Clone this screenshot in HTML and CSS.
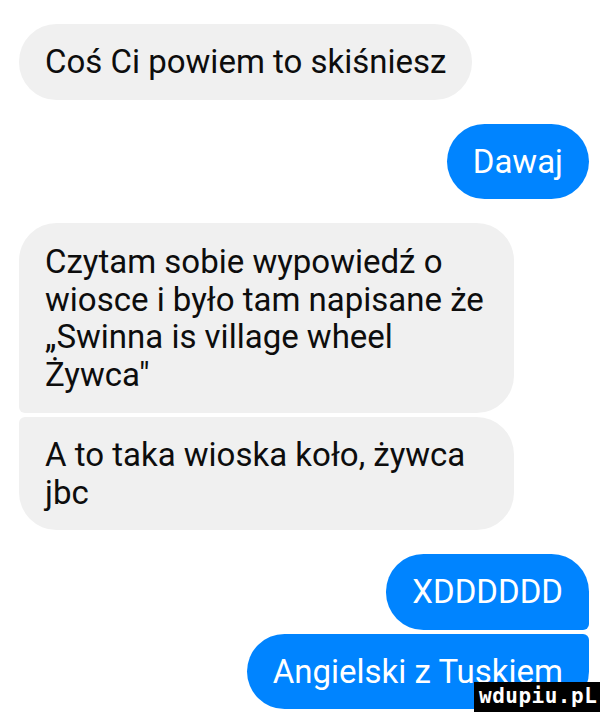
FILE: index.html
```html
<!DOCTYPE html>
<html lang="pl">
<head>
<meta charset="utf-8">
<title>Czat</title>
<link rel="stylesheet" href="styles.css">
</head>
<body>
<main class="chat">
  <div class="msg in solo">Coś Ci powiem to skiśniesz</div>
  <div class="msg out solo sep">Dawaj</div>
  <div class="msg in first sep wide tall">Czytam sobie wypowiedź o<br>wiosce i było tam napisane że<br>„Swinna is village wheel<br>Żywca"</div>
  <div class="msg in last grp wide">A to taka wioska koło, żywca<br>jbc</div>
  <div class="msg out first sep">XDDDDDD</div>
  <div class="msg out last grp">Angielski z Tuskiem</div>
</main>
<div class="watermark">wdupiu.pL</div>
</body>
</html>
```
FILE: styles.css
```css
html, body {
  margin: 0;
  padding: 0;
  background: #ffffff;
}
body {
  width: 600px;
  height: 712px;
  overflow: hidden;
  position: relative;
  font-family: Roboto, "Noto Sans", sans-serif;
}
.chat {
  display: flex;
  flex-direction: column;
  padding: 24px 11px 0 19px;
}
.msg {
  box-sizing: border-box;
  font-size: 33px;
  line-height: 37.5px;
  padding: 19px 26px;
  border-radius: 37.5px;
  white-space: nowrap;
}
.in {
  align-self: flex-start;
  background: #f0f0f0;
  color: #0d0d0d;
}
.out {
  align-self: flex-end;
  background: #0084ff;
  color: #fff;
}
.sep { margin-top: 24px; }
.grp { margin-top: 4px; }
.wide { width: 495px; }
.tall { padding-top: 20px; padding-bottom: 20px; }
.in.first { border-bottom-left-radius: 6px; }
.in.last { border-top-left-radius: 6px; }
.out.first { border-bottom-right-radius: 6px; }
.out.last { border-top-right-radius: 6px; }
.watermark {
  position: absolute;
  left: 474px;
  top: 682px;
  width: 126px;
  height: 30px;
  background: #000;
  color: #fff;
  font-family: "DejaVu Sans Mono", monospace;
  font-weight: bold;
  font-size: 21px;
  line-height: 28px;
  letter-spacing: 0.5px;
  padding-left: 5px;
  box-sizing: border-box;
  white-space: nowrap;
  overflow: hidden;
}
```
